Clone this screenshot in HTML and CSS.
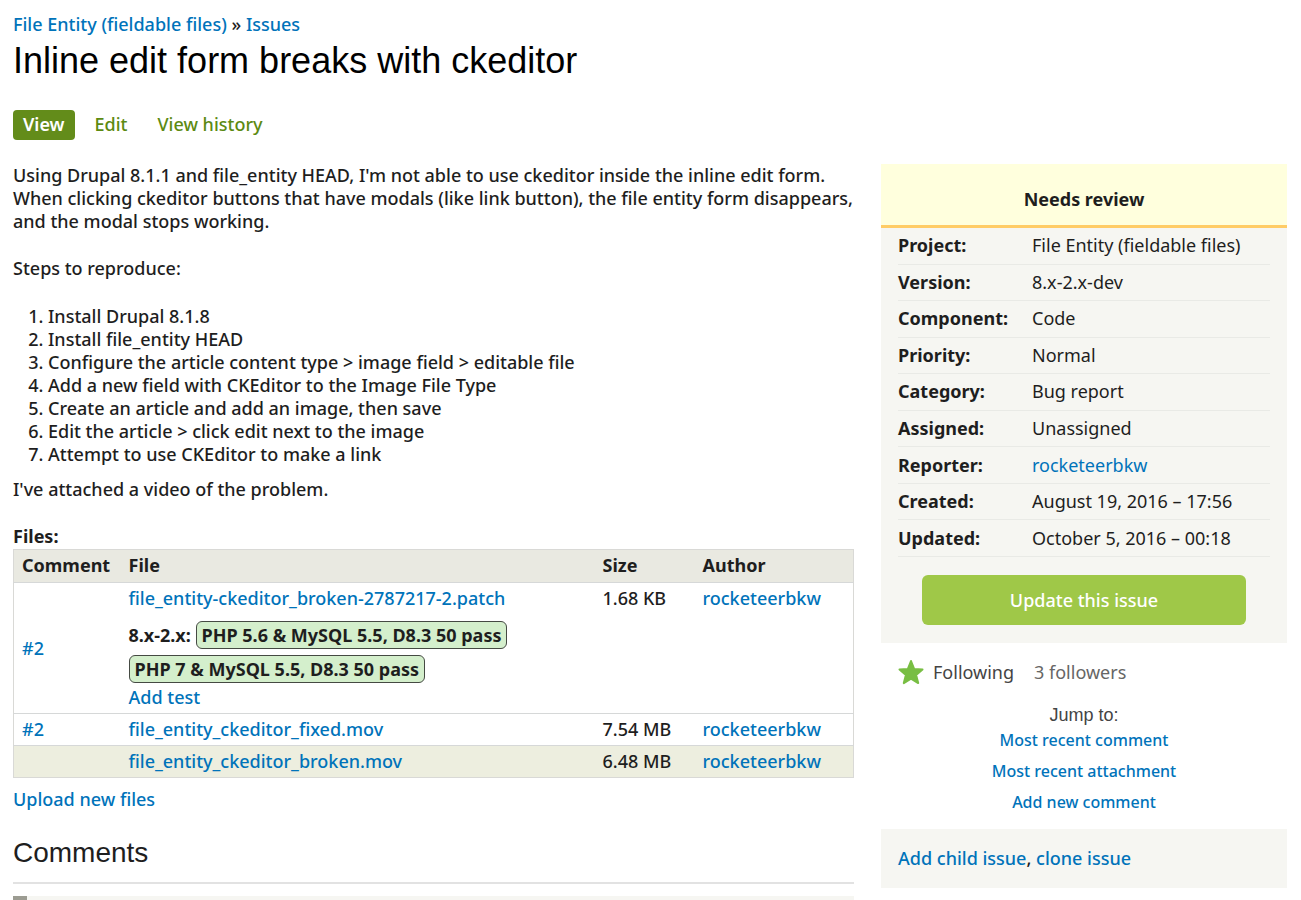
FILE: index.html
```html
<!DOCTYPE html>
<html lang="en">
<head>
<meta charset="utf-8">
<title>Inline edit form breaks with ckeditor</title>
<link rel="stylesheet" href="styles.css">
</head>
<body>
<header class="page-header">
  <nav class="breadcrumb" aria-label="Breadcrumb"><a href="#">File Entity (fieldable files)</a> » <a href="#">Issues</a></nav>
  <h1 class="page-title">Inline edit form breaks with ckeditor</h1>
  <nav class="tabs" aria-label="Page tabs">
    <a class="tab tab-active" href="#">View</a>
    <a class="tab" href="#">Edit</a>
    <a class="tab" href="#">View history</a>
  </nav>
</header>
<div class="layout">
  <main class="content">
    <p class="intro">Using Drupal 8.1.1 and file_entity HEAD, I'm not able to use ckeditor inside the inline edit form. When clicking ckeditor buttons that have modals (like link button), the file entity form disappears, and the modal stops working.</p>
    <p class="intro">Steps to reproduce:</p>
    <ol class="steps">
      <li>Install Drupal 8.1.8</li>
      <li>Install file_entity HEAD</li>
      <li>Configure the article content type &gt; image field &gt; editable file</li>
      <li>Add a new field with CKEditor to the Image File Type</li>
      <li>Create an article and add an image, then save</li>
      <li>Edit the article &gt; click edit next to the image</li>
      <li>Attempt to use CKEditor to make a link</li>
    </ol>
    <p class="intro">I've attached a video of the problem.</p>
    <div class="files-label" id="files-label">Files:</div>
    <table class="files" aria-labelledby="files-label">
      <colgroup><col class="col-comment"><col class="col-file"><col class="col-size"><col class="col-author"></colgroup>
      <thead>
        <tr><th>Comment</th><th>File</th><th>Size</th><th>Author</th></tr>
      </thead>
      <tbody>
        <tr>
          <td class="middle"><a href="#">#2</a></td>
          <td>
            <a href="#">file_entity-ckeditor_broken-2787217-2.patch</a>
            <div class="tests">8.x-2.x: <span class="badge">PHP 5.6 &amp; MySQL 5.5, D8.3 50 pass</span><br><span class="badge">PHP 7 &amp; MySQL 5.5, D8.3 50 pass</span></div>
            <a href="#">Add test</a>
          </td>
          <td>1.68 KB</td>
          <td><a href="#">rocketeerbkw</a></td>
        </tr>
        <tr><td><a href="#">#2</a></td><td><a href="#">file_entity_ckeditor_fixed.mov</a></td><td>7.54 MB</td><td><a href="#">rocketeerbkw</a></td></tr>
        <tr class="shaded"><td></td><td><a href="#">file_entity_ckeditor_broken.mov</a></td><td>6.48 MB</td><td><a href="#">rocketeerbkw</a></td></tr>
      </tbody>
    </table>
    <a class="upload" href="#">Upload new files</a>
    <h2 class="comments-title">Comments</h2>
    <div class="comment"></div>
  </main>
  <aside class="sidebar">
    <section class="summary">
      <div class="status">Needs review</div>
      <dl class="meta">
        <div class="meta-row"><dt>Project:</dt><dd>File Entity (fieldable files)</dd></div>
        <div class="meta-row"><dt>Version:</dt><dd>8.x-2.x-dev</dd></div>
        <div class="meta-row"><dt>Component:</dt><dd>Code</dd></div>
        <div class="meta-row"><dt>Priority:</dt><dd>Normal</dd></div>
        <div class="meta-row"><dt>Category:</dt><dd>Bug report</dd></div>
        <div class="meta-row"><dt>Assigned:</dt><dd>Unassigned</dd></div>
        <div class="meta-row"><dt>Reporter:</dt><dd><a href="#">rocketeerbkw</a></dd></div>
        <div class="meta-row"><dt>Created:</dt><dd>August 19, 2016 – 17:56</dd></div>
        <div class="meta-row"><dt>Updated:</dt><dd>October 5, 2016 – 00:18</dd></div>
      </dl>
      <button class="update" type="button">Update this issue</button>
    </section>
    <div class="follow">
      <button class="follow-toggle" type="button">
        <svg class="star" viewBox="0 0 26 26" aria-hidden="true"><path d="M13 2 L16.1 9.9 L24.5 10.5 L18.1 15.9 L20.2 24.1 L13 19.7 L5.8 24.1 L7.9 15.9 L1.5 10.5 L9.9 9.9 Z"/></svg>
        Following
      </button>
      <span class="followers">3 followers</span>
    </div>
    <nav class="jump" aria-label="Jump to">
      <div class="jump-title">Jump to:</div>
      <a href="#">Most recent comment</a>
      <a href="#">Most recent attachment</a>
      <a href="#">Add new comment</a>
    </nav>
    <div class="related"><a href="#">Add child issue</a>, <a href="#">clone issue</a></div>
  </aside>
</div>
</body>
</html>
```
FILE: styles.css
```css
* { box-sizing: border-box; }

body {
  margin: 0;
  padding: 13px 14px 0 13px;
  background: #fff;
  color: #1e1e1e;
  font-family: "Noto Sans", "Open Sans", sans-serif;
  font-size: 18px;
  font-weight: 500;
  line-height: 23px;
}

a { color: #0073ba; text-decoration: none; }
h1, h2, p, ol, dl, dd { margin: 0; }

.page-header { margin-bottom: 24px; }

.page-title {
  margin-bottom: 24px;
  color: #000;
  font-family: "Liberation Sans", Arial, sans-serif;
  font-size: 36px;
  font-weight: 400;
  line-height: 50px;
}

.tabs { display: flex; gap: 10px; }
.tab {
  padding: 3px 10px 4px;
  border-radius: 4px;
  color: #5c8a12;
}
.tab-active { background: #638c1a; color: #fff; font-weight: 600; }

.layout {
  display: grid;
  grid-template-columns: minmax(0, 29fr) minmax(0, 14fr);
  align-items: start;
  gap: 27px;
}

.intro { margin-bottom: 24px; }
.steps { margin: 25px 0 12px; padding-left: 35px; }

.files-label { padding-bottom: 1px; font-weight: 700; }

.files {
  width: 100%;
  border: 1px solid #d9d9d6;
  border-collapse: collapse;
  table-layout: fixed;
}
.files th, .files td {
  padding: 4px 8px;
  text-align: left;
  vertical-align: top;
}
.files th { padding-bottom: 5px; font-weight: 700; }
.files thead { background: #e9e9e1; }
.files tbody tr { border-top: 1px solid #d6d8d8; }
.files .middle { vertical-align: middle; }
.files .shaded { background: #edeedf; }
.col-comment { width: 107px; }
.col-size { width: 100px; }
.col-author { width: 159px; }

.tests { padding-top: 8px; font-weight: 700; line-height: 34px; }
.badge {
  display: inline-block;
  padding: 0 5px;
  border: 1px solid #454a43;
  border-radius: 6px;
  background: #d4efcc;
  line-height: 26px;
}

.upload { display: block; margin: 10px 0 24px; }

.comments-title {
  padding-bottom: 11px;
  border-bottom: 2px solid #e2e2e2;
  font-family: "Liberation Sans", Arial, sans-serif;
  font-size: 28px;
  font-weight: 400;
  line-height: 36px;
}
.comment {
  height: 48px;
  margin-top: 12px;
  border-left: 14px solid #9c9c92;
  background: #f6f6f2;
}

.summary { padding-bottom: 18px; background: #f6f6f2; }
.status {
  padding: 24px 17px 14px;
  border-bottom: 3px solid #ffcc66;
  background: #ffffdd;
  font-weight: 700;
  text-align: center;
}
.meta {
  display: grid;
  grid-auto-rows: 1fr;
  min-height: 329px;
  padding: 0 17px;
  font-weight: 400;
}
.meta-row {
  display: flex;
  align-items: center;
  border-bottom: 1px solid #e9eae6;
}
.meta dt { flex: 0 0 134px; font-weight: 700; }

.update {
  display: block;
  width: 80%;
  margin: 18px auto 0;
  padding: 13px;
  border: 0;
  border-radius: 6px;
  background: #9fc848;
  color: #fff;
  font: inherit;
  font-weight: 500;
  line-height: 24px;
}

.follow {
  display: flex;
  align-items: center;
  gap: 20px;
  padding: 16px 17px 0;
  color: #666;
  font-weight: 400;
}
.follow-toggle {
  display: flex;
  align-items: center;
  gap: 9px;
  padding: 0;
  border: 0;
  background: none;
  color: #444;
  font: inherit;
}
.star {
  width: 26px;
  height: 26px;
  fill: #78be43;
  stroke: #78be43;
  stroke-width: 2;
  stroke-linejoin: round;
}

.jump {
  display: flex;
  flex-direction: column;
  align-items: center;
  gap: 8px;
  padding: 19px 0 15px;
  font-size: 16px;
}
.jump-title {
  margin-bottom: -6px;
  color: #444;
  font-family: "Liberation Sans", Arial, sans-serif;
  font-size: 18px;
  font-weight: 400;
}
.related { padding: 18px 17px; background: #f6f6f2; }
```
